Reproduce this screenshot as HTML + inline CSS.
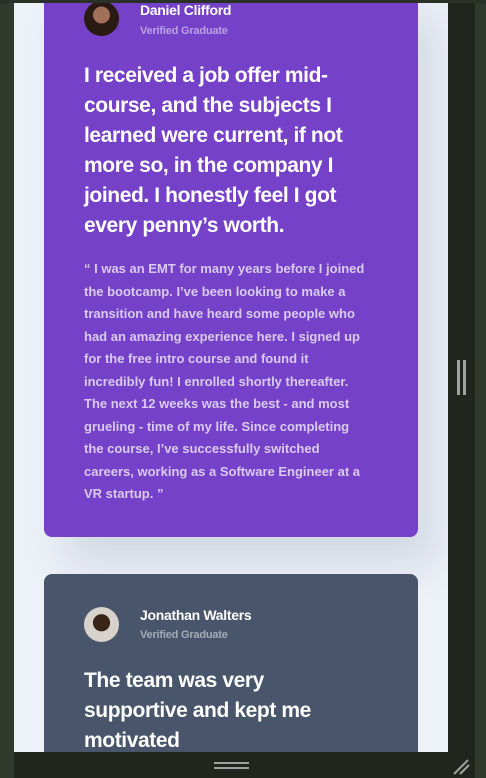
<!DOCTYPE html>
<html><head><meta charset="utf-8"><style>
*{margin:0;padding:0;box-sizing:border-box}
html,body{width:486px;height:778px;overflow:hidden;background:#2f3a2c}
body{position:relative;font-family:"Liberation Sans Narrow","Liberation Sans",sans-serif}
.top{position:absolute;left:0;top:0;width:486px;height:3px;background:#2a3127}
.content{position:absolute;left:14px;top:3px;width:434px;height:749px;background:#edf2f8;overflow:hidden}
.rp{position:absolute;left:448px;top:3px;width:27px;height:775px;background:#20251e}
.bb{position:absolute;left:14px;top:752px;width:461px;height:26px;background:#20251e}
.card{position:absolute;left:30px;width:374px;border-radius:8px;padding-left:40px;color:#fff}
.p{top:-20px;height:554px;background:#7541c8;box-shadow:20px 30px 40px rgba(72,85,106,.15)}
.g{top:571px;height:200px;background:#48556a}
.av{position:absolute;left:40px;width:35px;height:35px;border-radius:50%}
.nm{position:absolute;left:96px;font-size:14px;font-weight:bold;letter-spacing:-0.3px}
.sb{position:absolute;left:96px;font-size:11px;font-weight:bold;letter-spacing:-0.2px}
h2{position:absolute;left:40px;white-space:nowrap;font-size:21px;line-height:30px;font-weight:bold;letter-spacing:-0.4px}
.q{position:absolute;left:40px;top:275px;white-space:nowrap;font-size:13px;line-height:22.5px;color:rgba(255,255,255,.72);font-weight:bold;letter-spacing:0}
</style></head><body>
<div class="top"></div>
<div class="content">
 <div class="card p">
  <div class="av" style="top:18px;background:radial-gradient(circle at 50% 40%,#a0705a 0 30%,#2a1a14 32%)"></div>
  <div class="nm" style="top:19px">Daniel Clifford</div>
  <div class="sb" style="top:42px;color:rgba(255,255,255,.5)">Verified Graduate</div>
  <h2 style="top:78px">I received a job offer mid-<br>course, and the subjects I<br>learned were current, if not<br>more so, in the company I<br>joined. I honestly feel I got<br>every penny’s worth.</h2>
  <div class="q">“ I was an EMT for many years before I joined<br>the bootcamp. I’ve been looking to make a<br>transition and have heard some people who<br>had an amazing experience here. I signed up<br>for the free intro course and found it<br>incredibly fun! I enrolled shortly thereafter.<br>The next 12 weeks was the best - and most<br>grueling - time of my life. Since completing<br>the course, I’ve successfully switched<br>careers, working as a Software Engineer at a<br>VR startup. ”</div>
 </div>
 <div class="card g">
  <div class="av" style="top:33px;background:radial-gradient(circle at 50% 45%,#3a2418 0 32%,#d8d2cc 34%)"></div>
  <div class="nm" style="top:33px">Jonathan Walters</div>
  <div class="sb" style="top:55px;color:rgba(255,255,255,.5)">Verified Graduate</div>
  <h2 style="top:92px">The team was very<br>supportive and kept me<br>motivated</h2>
 </div>
</div>
<div class="rp">
 <div style="position:absolute;left:9px;top:357px;width:3px;height:35px;background:#a0a0a0"></div>
 <div style="position:absolute;left:15px;top:357px;width:3px;height:35px;background:#a0a0a0"></div>
</div>
<div class="bb">
 <div style="position:absolute;left:200px;top:10px;width:35px;height:2px;background:#a0a0a0"></div>
 <div style="position:absolute;left:200px;top:15px;width:35px;height:2px;background:#a0a0a0"></div>
 <svg style="position:absolute;left:438px;top:4px" width="20" height="20"><path d="M2 18L16 4M8 18L17 9" stroke="#a0a0a0" stroke-width="2"/></svg>
</div>
</body></html>
